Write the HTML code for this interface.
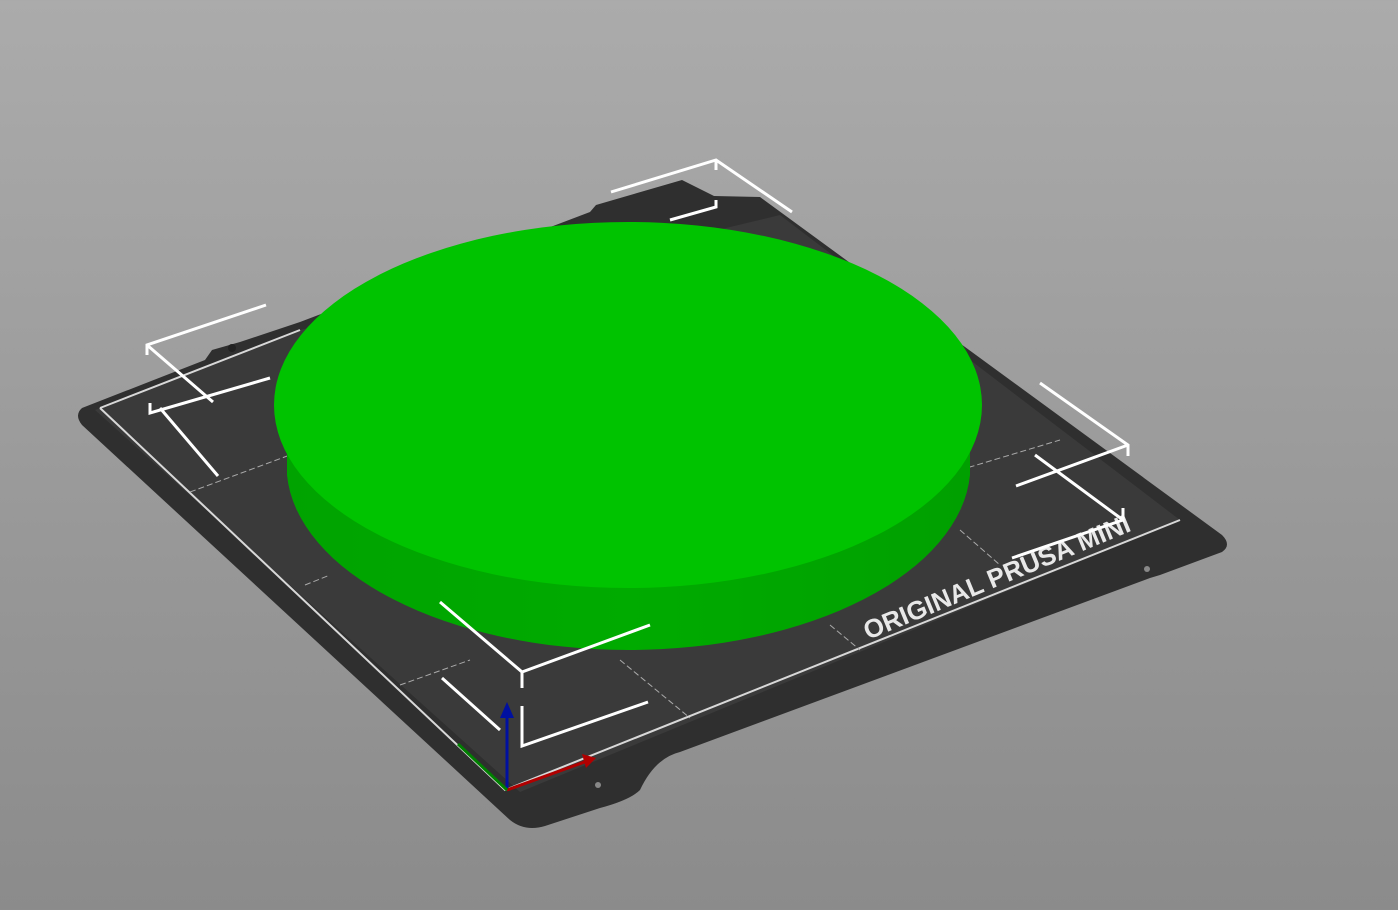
<!DOCTYPE html>
<html><head><style>html,body{margin:0;padding:0;width:1398px;height:910px;overflow:hidden}body{background:linear-gradient(#ababab,#8b8b8b)}</style></head>
<body>
<svg width="1398" height="910" viewBox="0 0 1398 910" xmlns="http://www.w3.org/2000/svg">
<defs>
<linearGradient id="side" x1="0" x2="1" y1="0" y2="0">
<stop offset="0" stop-color="#00a300"/><stop offset="0.5" stop-color="#00ab00"/><stop offset="1" stop-color="#00a000"/>
</linearGradient>
</defs>
<path d="M82,408 L205,360 L212,350 L240,342 L300,322 L590,212 L596,205 L682,180 L714,196 L760,197 L1222,535 Q1232,545 1222,552 L1160,575 L1150,578 L680,752 Q655,758 640,790 Q630,800 600,808 L545,826 Q525,832 510,820 L82,425 Q74,415 82,408 Z" fill="#2f2f2f"/>
<path d="M95,410 L300,330 L780,215 L1180,520 L520,792 Z" fill="#3a3a3a"/>
<path d="M100,408 L300,330 M1180,520 L505,790 L100,408" stroke="#d8d8d8" stroke-width="2" fill="none"/>
<path d="M190,492 L290,455 M305,585 L330,575 M400,685 L470,660 M620,660 L690,718 M830,625 L860,650 M960,530 L1000,565 M960,470 L1060,440" stroke="#aaa" stroke-width="1" stroke-dasharray="6,3" fill="none"/>
<text x="0" y="0" transform="translate(868,640) rotate(-22.5)" font-family="Liberation Sans, sans-serif" font-weight="bold" font-size="26" fill="#e8e8e8">ORIGINAL PRUSA MINI</text>
<circle cx="598" cy="785" r="3" fill="#888"/><circle cx="1147" cy="569" r="3" fill="#888"/><circle cx="232" cy="348" r="4" fill="#222"/>
<path d="M287,475 L287,410 L970,410 L970,475 A342,185 0 0 1 287,475 Z" fill="url(#side)"/>
<ellipse cx="628" cy="405" rx="354" ry="183" fill="#00c300"/>
<g stroke="#fff" stroke-width="3" fill="none">
<path d="M266,305 L147,345 L147,355 M147,345 L213,402"/>
<path d="M611,192 L716,160 L792,212 M716,160 L716,170"/>
<path d="M1040,383 L1128,445 L1128,456 M1128,445 L1016,486"/>
<path d="M440,602 L522,672 L522,688 M522,672 L650,625"/>
<path d="M150,403 L150,413 L270,378 M160,408 L218,476"/>
<path d="M1035,455 L1123,520 L1123,508 M1123,520 L1012,558"/>
<path d="M522,706 L522,746 L648,702 M442,678 L500,730"/>
<path d="M670,220 L716,207 L716,200"/>
</g>
<path d="M507,790 L507,712" stroke="#0010a0" stroke-width="3"/><path d="M500,718 L507,702 L514,718 Z" fill="#0010a0"/>
<path d="M507,790 L590,760" stroke="#b00000" stroke-width="3"/><path d="M582,754 L596,758 L586,768 Z" fill="#b00000"/>
<path d="M507,790 L458,744" stroke="#008000" stroke-width="3"/>
</svg>
</body></html>
